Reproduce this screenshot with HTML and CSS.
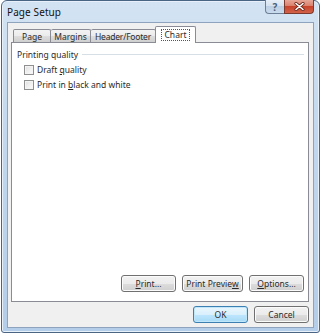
FILE: index.html
```html
<!DOCTYPE html>
<html>
<head>
<meta charset="utf-8">
<link rel="stylesheet" href="styles.css">
</head>
<body>
<div class="window">
  <div class="titlebar">
    <span class="title">Page Setup</span>
    <div class="caption-btns">
      <span class="cbtn help">?</span>
      <span class="cbtn close">
        <svg width="11" height="9" viewBox="0 0 11 9"><path d="M2 1.5 L9 7.5 M9 1.5 L2 7.5" stroke="#6b2a20" stroke-width="3.2" stroke-linecap="round"/><path d="M2 1.5 L9 7.5 M9 1.5 L2 7.5" stroke="#ffffff" stroke-width="1.6" stroke-linecap="round"/></svg>
      </span>
    </div>
  </div>
  <div class="client">
    <div class="tabs">
      <span class="tab t-page">Page</span>
      <span class="tab t-margins">Margins</span>
      <span class="tab t-header">Header/Footer</span>
      <span class="tab active t-chart"><span class="focus">Chart</span></span>
    </div>
    <div class="panel">
      <div class="group-title"><span>Printing quality</span><span class="rule"></span></div>
      <div class="checks">
        <label class="check"><span class="box"></span><span>Draft <u>q</u>uality</span></label>
        <label class="check"><span class="box"></span><span>Print in <u>b</u>lack and white</span></label>
      </div>
      <div class="panel-buttons">
        <span class="btn b-print"><u>P</u>rint...</span>
        <span class="btn b-preview">Print Previe<u>w</u></span>
        <span class="btn b-options"><u>O</u>ptions...</span>
      </div>
    </div>
    <div class="dialog-buttons">
      <span class="btn default">OK</span>
      <span class="btn">Cancel</span>
    </div>
  </div>
</div>
</body>
</html>
```
FILE: styles.css
```css
* { box-sizing: border-box; }
html, body { margin: 0; padding: 0; background: #ffffff; }
body {
  font-family: "Noto Sans", "Open Sans", sans-serif;
  font-size: 8.5px;
  color: #2a2a2a;
}
.window {
  width: 319px;
  height: 333px;
  margin-left: 1px;
  border: 1px solid #4a6584;
  border-radius: 6px 6px 3px 3px;
  background: linear-gradient(180deg, #d3e3f3 0%, #c3d8ee 40%, #b4cde8 100%);
  display: flex;
  flex-direction: column;
  padding: 0 5px 4px 5px;
  box-shadow: inset 0 0 0 1px #e8f1fa;
}
.titlebar {
  height: 21px;
  display: flex;
  align-items: flex-start;
  justify-content: space-between;
  flex: none;
}
.title {
  font-size: 10px;
  color: #111;
  margin-top: 4px;
  margin-left: 0;
  letter-spacing: 0.1px;
}
.caption-btns {
  display: flex;
  margin-top: -1px;
  margin-right: 0;
}
.cbtn {
  height: 14px;
  display: flex;
  align-items: center;
  justify-content: center;
  border: 1px solid #6b7f96;
  border-top: none;
}
.help {
  width: 19px;
  border-radius: 0 0 0 4px;
  border-right: none;
  background: linear-gradient(180deg, #e6eef7 0%, #d6e2ef 45%, #bccfe3 50%, #c9dbee 100%);
  color: #4b5f78;
  font-size: 10px;
  font-weight: bold;
}
.close {
  width: 30px;
  border-radius: 0 0 4px 0;
  border-color: #7b3a2e;
  background: linear-gradient(180deg, #e7a797 0%, #d9816d 45%, #c7432b 50%, #d2624a 100%);
}
.client {
  flex: 1;
  background: #f0f0f0;
  border: 1px solid #8ea3bd;
  display: flex;
  flex-direction: column;
  padding: 2px 4px 4px 3px;
}
.tabs {
  display: flex;
  align-items: flex-end;
  padding-left: 2px;
  height: 17px;
  position: relative;
  z-index: 1;
  flex: none;
}
.tab {
  height: 13px;
  border: 1px solid #898c95;
  border-bottom: none;
  border-left: none;
  background: linear-gradient(180deg, #f3f3f3 0%, #ebebeb 50%, #dddddd 51%, #cfcfcf 100%);
  display: flex;
  align-items: center;
  justify-content: center;
  border-radius: 2px 2px 0 0;
  color: #2a2a2a;
  white-space: nowrap;
}
.tab:first-child { border-left: 1px solid #898c95; }
.t-page { width: 38px; }
.t-margins { width: 40px; }
.t-header { width: 65px; letter-spacing: -0.2px; }
.tab.active {
  width: 41px;
  height: 17px;
  background: #ffffff;
  border-left: 1px solid #898c95;
  margin-left: -1px;
  margin-bottom: -1px;
  padding-bottom: 1px;
}
.focus {
  border: 1px dotted #555;
  padding: 0 3px;
  line-height: 10px;
  height: 12px;
  display: flex;
  align-items: center;
}
.panel {
  flex: 1;
  background: #ffffff;
  border: 1px solid #898c95;
  display: flex;
  flex-direction: column;
  padding: 5px 4px 9px 5px;
}
.group-title {
  display: flex;
  align-items: center;
  gap: 4px;
  height: 12px;
}
.rule {
  flex: 1;
  height: 1px;
  background: #d5dfe5;
}
.checks {
  display: flex;
  flex-direction: column;
  gap: 2px;
  padding-left: 7px;
  margin-top: 3px;
}
.check {
  display: flex;
  align-items: center;
  gap: 3px;
  height: 13px;
}
.box {
  width: 10px;
  height: 10px;
  border: 1px solid #8e8f8f;
  background: linear-gradient(135deg, #dedede 0%, #f2f2f2 60%, #fbfbfb 100%);
  box-shadow: inset 0 0 0 1px #f4f4f4;
}
.panel-buttons {
  margin-top: auto;
  display: flex;
  justify-content: flex-end;
  gap: 6px;
}
.btn {
  height: 17px;
  border: 1px solid #707070;
  border-radius: 3px;
  background: linear-gradient(180deg, #f2f2f2 0%, #ebebeb 50%, #dddddd 51%, #cfcfcf 100%);
  box-shadow: inset 0 0 0 1px #fbfbfb;
  display: flex;
  align-items: center;
  justify-content: center;
  color: #2a2a2a;
  white-space: nowrap;
}
.b-print { width: 55px; }
.b-preview { width: 61px; }
.b-options { width: 55px; }
.dialog-buttons {
  display: flex;
  justify-content: flex-end;
  gap: 6px;
  margin-top: 4px;
  flex: none;
}
.dialog-buttons .btn { width: 55px; }
.btn.default {
  border-color: #3c7fb1;
  box-shadow: inset 0 0 0 1px #bfe7f9;
  background: linear-gradient(180deg, #eaf6fd 0%, #d9f0fc 50%, #bee6fd 51%, #a7d9f5 100%);
}
u { text-decoration-thickness: 1px; text-underline-offset: 1px; }
```
